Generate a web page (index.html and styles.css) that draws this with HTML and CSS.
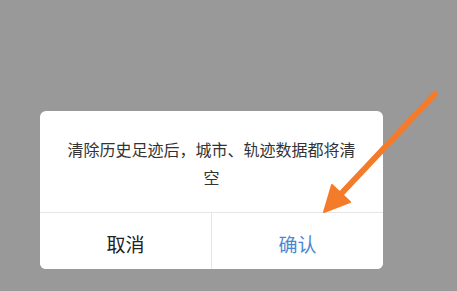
FILE: index.html
```html
<!DOCTYPE html>
<html lang="zh-CN">

<head>
	<meta charset="UTF-8">
	<meta name="viewport" content="width=device-width, initial-scale=1.0">
	<title>清除历史足迹</title>
	<link rel="stylesheet" href="styles.css">
</head>

<body>
	<div class="mask">
		<div class="dialog">
			<p class="msg">清除历史足迹后，城市、轨迹数据都将清空</p>
			<div class="btns">
				<button class="btn cancel">取消</button>
				<button class="btn ok">确认</button>
			</div>
		</div>

		<!-- 标注箭头 -->
		<svg class="arrow" width="457" height="291" viewBox="0 0 457 291">
			<line x1="435" y1="94" x2="339" y2="196" stroke="#f47b2a" stroke-width="6" stroke-linecap="round" />
			<polygon points="324,212 350,202 332,185" fill="#f47b2a" stroke="#f47b2a" stroke-width="2" stroke-linejoin="round" />
		</svg>
	</div>
</body>

</html>
```

FILE: styles.css
```css
* {
	margin: 0;
	padding: 0;
	box-sizing: border-box;
}

body {
	background: #999;
	font-family: "Noto Sans CJK SC", "Noto Sans", sans-serif;
}

.mask {
	position: relative;
	width: 457px;
	height: 291px;
	padding-top: 111px;
}

.dialog {
	width: 343px;
	margin-left: 40px;
	background: #fff;
	border-radius: 6px;
	overflow: hidden;
}

.msg {
	padding: 24px 22px 21px;
	font-size: 16px;
	line-height: 28px;
	color: #333;
	text-align: center;
}

.btns {
	display: flex;
	border-top: 1px solid #e6e6e6;
}

.btn {
	flex: 1;
	height: 56px;
	padding-top: 4px;
	border: none;
	background: #fff;
	font-family: inherit;
	font-size: 19px;
	color: #222;
}

.cancel {
	border-right: 1px solid #e6e6e6;
}

.ok {
	color: #4a89d2;
}

.arrow {
	position: absolute;
	left: 0;
	top: 0;
}
```
